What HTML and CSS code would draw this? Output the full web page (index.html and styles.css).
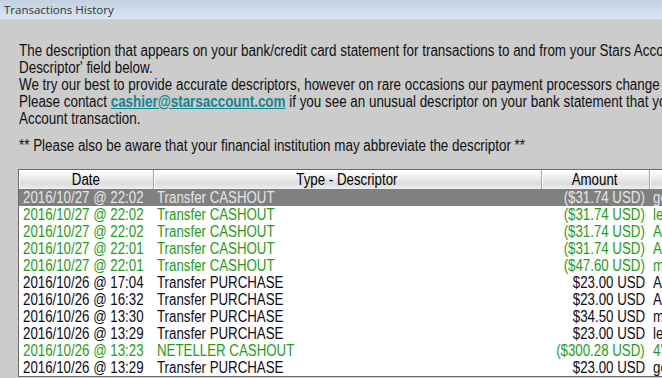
FILE: index.html
```html
<!DOCTYPE html>
<html>
<head>
<meta charset="utf-8">
<link rel="stylesheet" href="styles.css">
</head>
<body>
<div class="titlebar">Transactions History</div>
<div class="content">
  <div class="intro">
    <div class="line"><span class="n">The description that appears on your bank/credit card statement for transactions to and from your Stars Account is shown in the 'Type -</span></div>
    <div class="line"><span class="n">Descriptor' field below.</span></div>
    <div class="line"><span class="n">We try our best to provide accurate descriptors, however on rare occasions our payment processors change the descriptor without notice.</span></div>
    <div class="line"><span class="n">Please contact <a class="mail" href="#">cashier@starsaccount.com</a> if you see an unusual descriptor on your bank statement that you believe is related to a Stars</span></div>
    <div class="line"><span class="n">Account transaction.</span></div>
    <div class="line note"><span class="n">** Please also be aware that your financial institution may abbreviate the descriptor **</span></div>
  </div>
  <div class="grid">
    <table class="tx">
      <colgroup><col class="c-date"><col class="c-type"><col class="c-amt"><col class="c-more"></colgroup>
      <thead>
        <tr><th><span class="n c">Date</span></th><th><span class="n c">Type - Descriptor</span></th><th><span class="n c">Amount</span></th><th></th></tr>
      </thead>
      <tbody>
        <tr class="sel"><td><span class="n">2016/10/27 @ 22:02</span></td><td><span class="n">Transfer CASHOUT</span></td><td><div class="amt"><span class="n r">($31.74 USD)</span></div></td><td><span class="n">goldenstar</span></td></tr>
        <tr class="out"><td><span class="n">2016/10/27 @ 22:02</span></td><td><span class="n">Transfer CASHOUT</span></td><td><div class="amt"><span class="n r">($31.74 USD)</span></div></td><td><span class="n">lemonade</span></td></tr>
        <tr class="out"><td><span class="n">2016/10/27 @ 22:02</span></td><td><span class="n">Transfer CASHOUT</span></td><td><div class="amt"><span class="n r">($31.74 USD)</span></div></td><td><span class="n">Aurora</span></td></tr>
        <tr class="out"><td><span class="n">2016/10/27 @ 22:01</span></td><td><span class="n">Transfer CASHOUT</span></td><td><div class="amt"><span class="n r">($31.74 USD)</span></div></td><td><span class="n">Aurora</span></td></tr>
        <tr class="out"><td><span class="n">2016/10/27 @ 22:01</span></td><td><span class="n">Transfer CASHOUT</span></td><td><div class="amt"><span class="n r">($47.60 USD)</span></div></td><td><span class="n">maple</span></td></tr>
        <tr><td><span class="n">2016/10/26 @ 17:04</span></td><td><span class="n">Transfer PURCHASE</span></td><td><div class="amt"><span class="n r">$23.00 USD</span></div></td><td><span class="n">Aurora</span></td></tr>
        <tr><td><span class="n">2016/10/26 @ 16:32</span></td><td><span class="n">Transfer PURCHASE</span></td><td><div class="amt"><span class="n r">$23.00 USD</span></div></td><td><span class="n">Aurora</span></td></tr>
        <tr><td><span class="n">2016/10/26 @ 13:30</span></td><td><span class="n">Transfer PURCHASE</span></td><td><div class="amt"><span class="n r">$34.50 USD</span></div></td><td><span class="n">maple</span></td></tr>
        <tr><td><span class="n">2016/10/26 @ 13:29</span></td><td><span class="n">Transfer PURCHASE</span></td><td><div class="amt"><span class="n r">$23.00 USD</span></div></td><td><span class="n">lemonade</span></td></tr>
        <tr class="out"><td><span class="n">2016/10/26 @ 13:23</span></td><td><span class="n">NETELLER CASHOUT</span></td><td><div class="amt"><span class="n r">($300.28 USD)</span></div></td><td><span class="n">4'12</span></td></tr>
        <tr><td><span class="n">2016/10/26 @ 13:29</span></td><td><span class="n">Transfer PURCHASE</span></td><td><div class="amt"><span class="n r">$23.00 USD</span></div></td><td><span class="n">goldenstar</span></td></tr>
      </tbody>
    </table>
  </div>
</div>
</body>
</html>
```
FILE: styles.css
```css
html, body {
  margin: 0;
  padding: 0;
  width: 662px;
  height: 378px;
  overflow: hidden;
  background: #cccccc;
}
.titlebar {
  height: 20px;
  box-sizing: border-box;
  padding: 2px 0 0 4px;
  font-family: "Open Sans", "Noto Sans", sans-serif;
  font-size: 11.5px;
  line-height: 16px;
  color: #333333;
  background: linear-gradient(#c2d1e1, #dae5f2);
  border-bottom: 1px solid #c8d3df;
  white-space: nowrap;
}
.content {
  padding: 22px 0 0 18px;
}
.n {
  display: inline-block;
  white-space: nowrap;
  transform: scaleX(0.83);
  transform-origin: left center;
}
.n.r {
  transform-origin: right center;
}
.n.c {
  transform-origin: center center;
}
.intro {
  padding-left: 1px;
  font-family: "Liberation Sans", Arial, sans-serif;
  font-size: 16px;
  line-height: 17px;
  color: #101010;
  white-space: nowrap;
}
.intro .n {
  transform: scaleX(0.838);
}
.line {
  height: 17px;
}
.note {
  margin-top: 10px;
}
.mail {
  color: #16848f;
  font-weight: bold;
  text-decoration: underline;
}
.grid {
  margin-top: 15px;
  width: 700px;
  border: 1px solid #6a6a6a;
  border-right: none;
  background: #ffffff;
}
.tx {
  border-collapse: collapse;
  table-layout: fixed;
  width: 700px;
  font-family: "Liberation Sans", Arial, sans-serif;
  font-size: 16px;
}
.c-date { width: 134px; }
.c-type { width: 388px; }
.c-amt { width: 108px; }
.c-more { width: 70px; }
.tx th {
  height: 19px;
  padding: 0;
  font-weight: normal;
  color: #000;
  text-align: center;
  background: linear-gradient(#ffffff 0%, #f2f2f2 30%, #dcdcdc 70%, #eeeeee 100%);
  border-right: 1px solid #a8a8a8;
  box-shadow: inset 1px 0 0 #ffffff;
  line-height: 19px;
  white-space: nowrap;
  overflow: hidden;
}
.tx td {
  height: 17px;
  padding: 0 4px;
  line-height: 17px;
  white-space: nowrap;
  overflow: hidden;
  color: #0b0b1a;
}
.amt {
  display: flex;
  justify-content: flex-end;
}
.tx tr.out td {
  color: #1f9d16;
}
.tx tr.sel td {
  background: #808080;
  color: #e6e6e6;
}
```
